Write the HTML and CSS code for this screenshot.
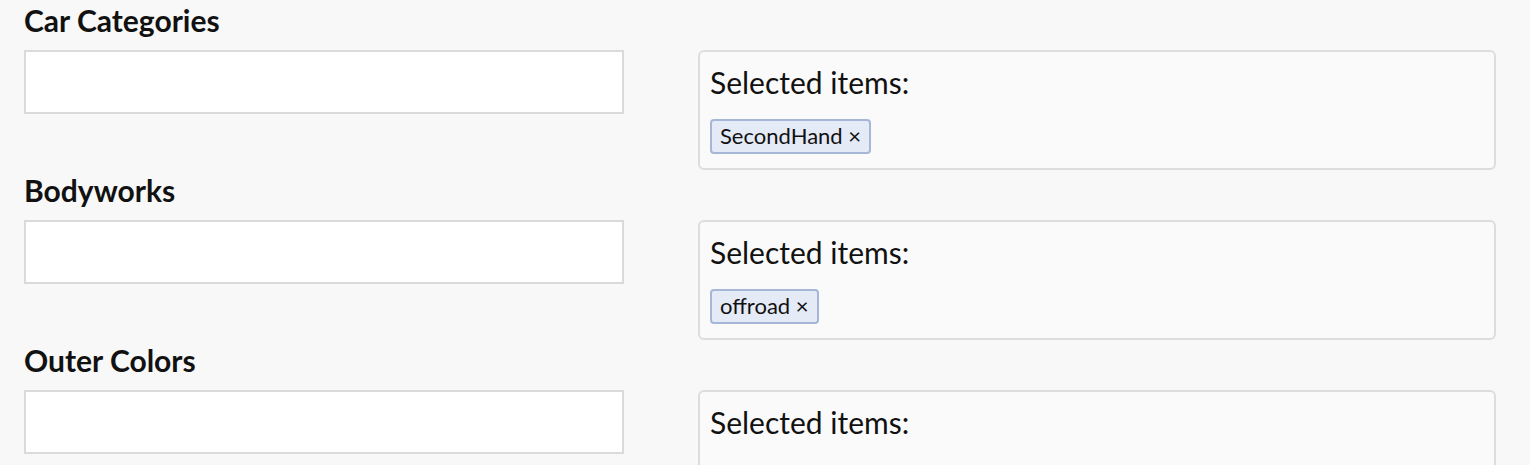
FILE: index.html
```html
<!DOCTYPE html>
<html>
<head>
<meta charset="utf-8">
<link rel="stylesheet" href="styles.css">
</head>
<body>
<div class="page">
  <section class="field">
    <h2 class="field-title">Car Categories</h2>
    <div class="field-row">
      <div class="input-col"><input class="text-input" type="text"></div>
      <div class="selected-box">
        <p class="selected-label">Selected items:</p>
        <div class="tags"><span class="tag">SecondHand ×</span></div>
      </div>
    </div>
  </section>
  <section class="field">
    <h2 class="field-title">Bodyworks</h2>
    <div class="field-row">
      <div class="input-col"><input class="text-input" type="text"></div>
      <div class="selected-box">
        <p class="selected-label">Selected items:</p>
        <div class="tags"><span class="tag">offroad ×</span></div>
      </div>
    </div>
  </section>
  <section class="field">
    <h2 class="field-title">Outer Colors</h2>
    <div class="field-row">
      <div class="input-col"><input class="text-input" type="text"></div>
      <div class="selected-box">
        <p class="selected-label">Selected items:</p>
        <div class="tags"></div>
      </div>
    </div>
  </section>
</div>
</body>
</html>
```
FILE: styles.css
```css
html, body {
  margin: 0;
  padding: 0;
  background: #f8f8f8;
  font-family: Lato, "Open Sans", sans-serif;
  color: #111;
}
.page {
  padding: 0 24px;
}
.field-title {
  margin: 2px 0 12px;
  font-size: 30px;
  line-height: 36px;
  font-weight: 700;
}
.field-row {
  display: grid;
  grid-template-columns: 674px 798px;
  align-items: start;
}
.text-input {
  display: block;
  box-sizing: border-box;
  width: 600px;
  height: 64px;
  border: 2px solid #dadada;
  background: #fff;
  border-radius: 0;
  outline: none;
  margin: 0;
}
.selected-box {
  box-sizing: border-box;
  height: 120px;
  border: 2px solid #dddddd;
  border-radius: 6px;
  background: #fafafa;
  padding: 12px 10px 0;
}
.selected-label {
  margin: 0;
  font-size: 30px;
  line-height: 36px;
}
.tags {
  display: flex;
  gap: 8px;
  margin-top: 19px;
}
.tag {
  box-sizing: border-box;
  height: 35px;
  line-height: 30px;
  padding: 0 8px 1px;
  border: 2px solid #a6b6d6;
  border-radius: 4px;
  background: #e4eaf6;
  font-size: 22px;
}
```
